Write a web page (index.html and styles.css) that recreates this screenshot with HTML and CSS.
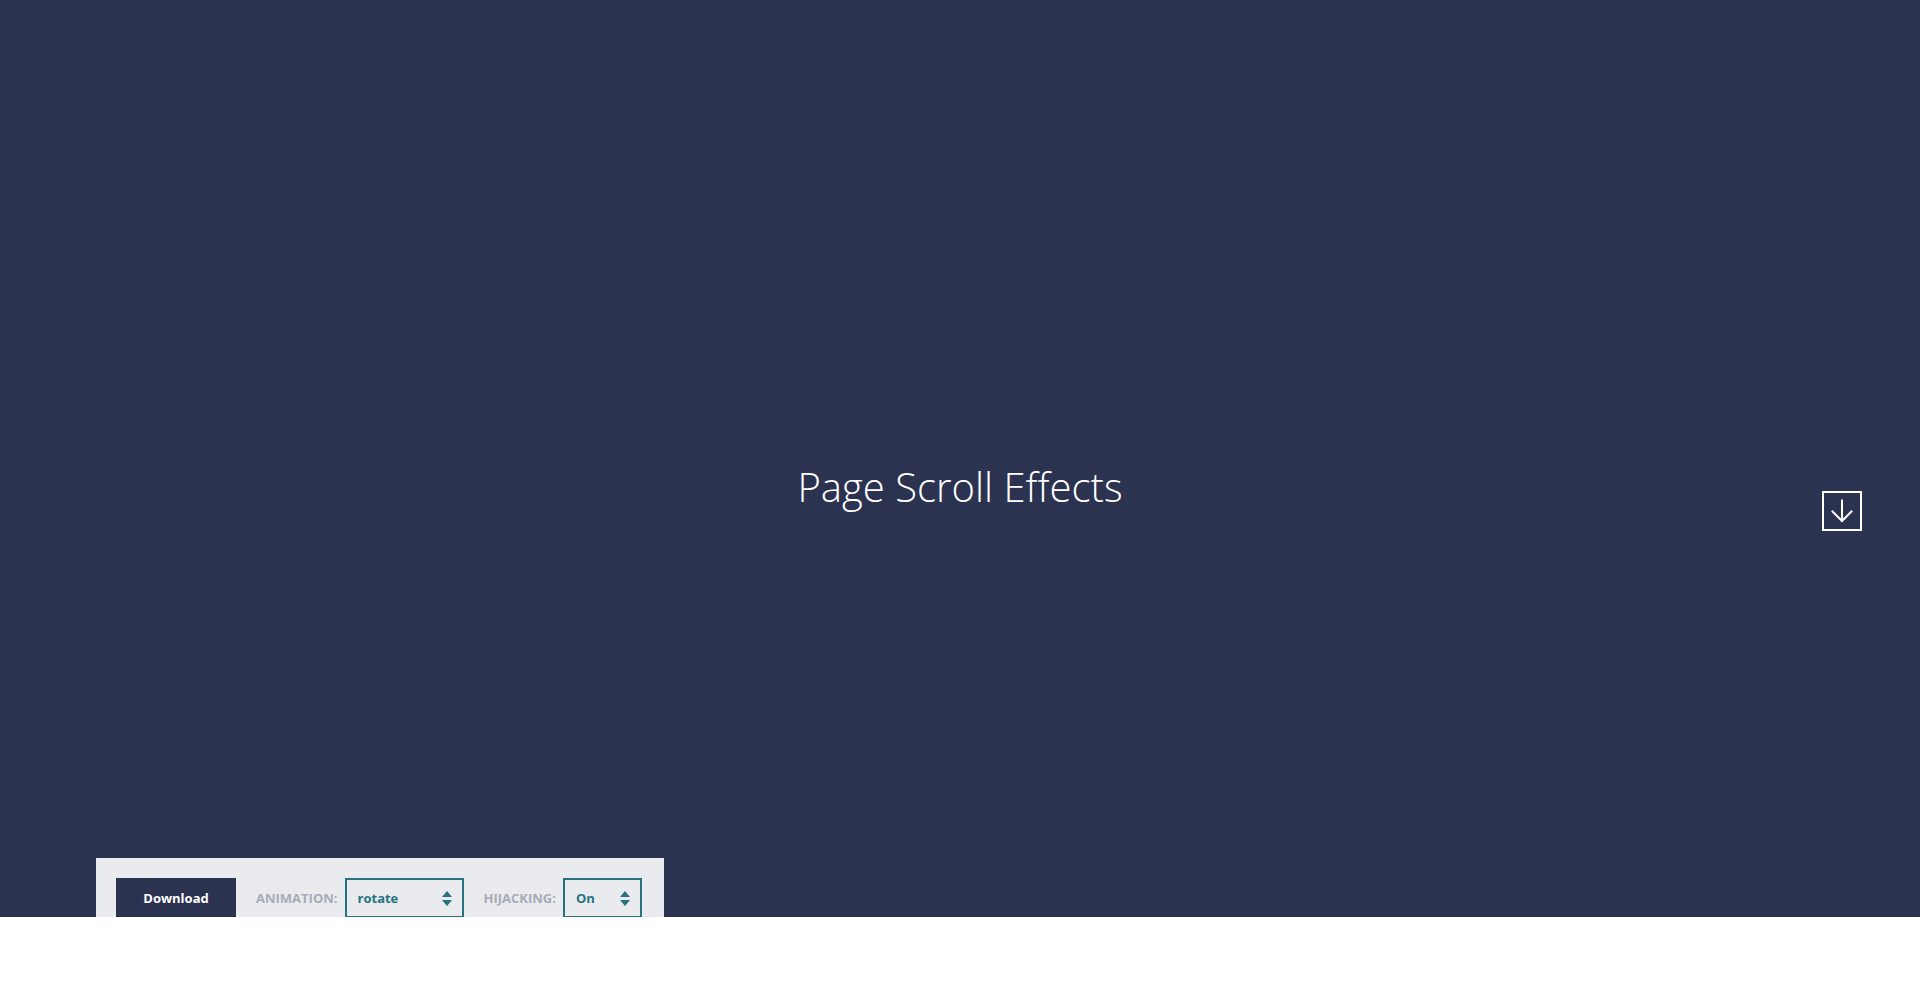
FILE: index.html
```html
<!DOCTYPE html>
<html lang="en">
<head>
<meta charset="utf-8">
<title>Page Scroll Effects</title>
<link rel="stylesheet" href="styles.css">
</head>
<body>
<section class="hero">
  <h1 class="hero-title">Page Scroll Effects</h1>

  <nav class="vertical-nav">
    <a class="nav-next" href="#" aria-label="Next section">
      <svg width="24" height="24" viewBox="0 0 24 24" fill="none" stroke="#fff" stroke-width="2" stroke-linecap="square">
        <path d="M12 1.5 V22"/>
        <path d="M2.5 12.5 L12 22 L21.5 12.5"/>
      </svg>
    </a>
  </nav>

  <div class="options">
    <a class="btn-download" href="#">Download</a>
    <div class="option">
      <span class="option-label">Animation:</span>
      <div class="select select-wide">
        <span class="select-value">rotate</span>
        <span class="select-arrows"><i class="tri-up"></i><i class="tri-down"></i></span>
      </div>
    </div>
    <div class="option">
      <span class="option-label">Hijacking:</span>
      <div class="select select-narrow">
        <span class="select-value">On</span>
        <span class="select-arrows"><i class="tri-up"></i><i class="tri-down"></i></span>
      </div>
    </div>
  </div>
</section>
<div class="page-rest"></div>
</body>
</html>
```

FILE: styles.css
```css
* { box-sizing: border-box; }

html, body {
  margin: 0;
  padding: 0;
  background: #ffffff;
  font-family: "Open Sans", "Noto Sans", sans-serif;
}

.hero {
  position: relative;
  height: 917px;
  background: #2c3351;
  overflow: hidden;
  display: flex;
  align-items: center;
  justify-content: center;
  padding-top: 56px;
}

.hero-title {
  margin: 0;
  color: #ffffff;
  font-weight: 300;
  font-size: 40px;
  line-height: 1.2;
  letter-spacing: 0;
}

.vertical-nav {
  position: absolute;
  right: 58px;
  top: 491px;
}

.nav-next {
  display: flex;
  align-items: center;
  justify-content: center;
  width: 40px;
  height: 40px;
  border: 2px solid #ffffff;
}

.options {
  position: absolute;
  left: 96px;
  top: 858px;
  width: 568px;
  height: 80px;
  background: #e9ebef;
  padding: 20px 20px;
  display: flex;
  align-items: flex-start;
  gap: 20px;
}

.btn-download {
  display: flex;
  align-items: center;
  justify-content: center;
  width: 120px;
  height: 40px;
  background: #2c3351;
  color: #ffffff;
  font-weight: 700;
  font-size: 13px;
  text-decoration: none;
}

.option {
  display: flex;
  align-items: center;
  height: 40px;
  gap: 7px;
}

.option-label {
  text-transform: uppercase;
  color: #a7abb7;
  font-weight: 700;
  font-size: 13px;
}

.select {
  display: flex;
  align-items: center;
  justify-content: space-between;
  height: 40px;
  border: 2px solid #267380;
  padding: 0 10px 0 11px;
  color: #267380;
  font-weight: 700;
  font-size: 13px;
}

.select-wide { width: 119px; }
.select-narrow { width: 79px; }

.select-arrows {
  display: flex;
  flex-direction: column;
  gap: 3px;
}

.tri-up, .tri-down {
  display: block;
  width: 0;
  height: 0;
  border-left: 5px solid transparent;
  border-right: 5px solid transparent;
}

.tri-up { border-bottom: 6px solid #267380; }
.tri-down { border-top: 6px solid #267380; }

.page-rest {
  height: 67px;
  background: #ffffff;
}
```
